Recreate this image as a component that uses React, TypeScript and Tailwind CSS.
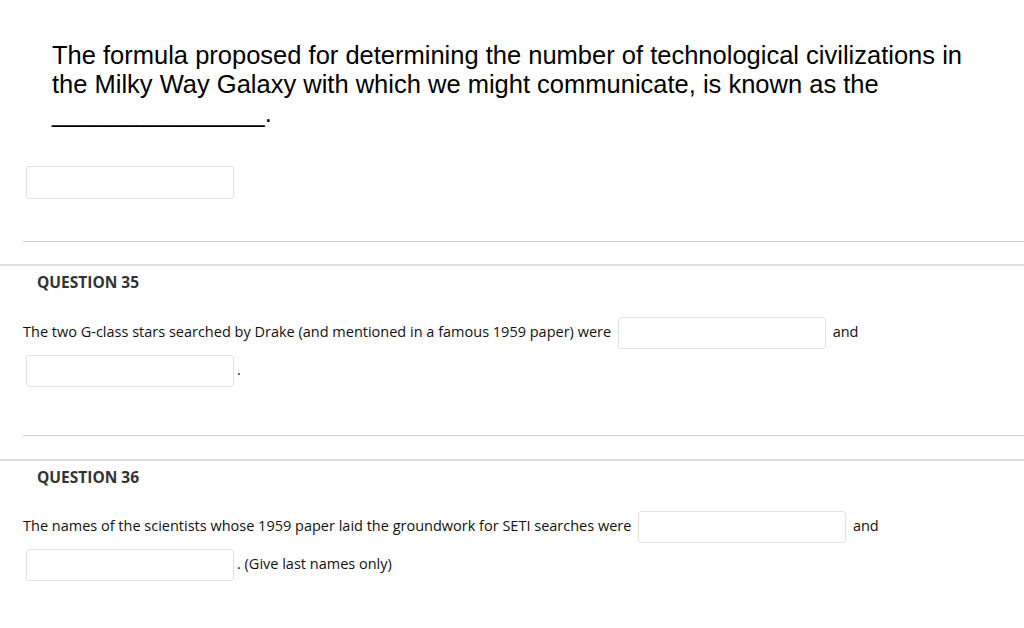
import React from 'react';

function Blank({ className = '' }: { className?: string }) {
  return (
    <input
      type="text"
      className={`inline-block h-[32px] w-[208px] rounded-[3px] border border-[#e2e2e2] bg-white align-middle outline-none ${className}`}
    />
  );
}

function QuestionHeader({ num, gap }: { num: number; gap: string }) {
  return (
    <>
      <div className="ml-[23px] h-px bg-[#cfcfcf]" />
      <div className={`${gap} h-[2px] bg-[#e0e0e0]`} />
      <h3 className="mt-[6px] pl-[37px] text-[15.5px] font-bold leading-[20px] text-[#333]">QUESTION {num}</h3>
    </>
  );
}

export default function App() {
  return (
    <div className="min-h-[628px] w-[1024px] bg-white pb-10 font-['Open_Sans',sans-serif]">
      <div className="pl-[52px] pr-[40px] pt-[41px] font-['Liberation_Sans',Arial,sans-serif] text-[25.5px] leading-[29px] text-black">
        <p>
          The formula proposed for determining the number of technological civilizations in the Milky Way Galaxy with
          which we might communicate, is known as the
        </p>
        <p>_______________.</p>
      </div>

      <div className="mt-[38px] pl-[26px]">
        <Blank className="h-[33px]" />
      </div>

      <div className="mt-[42px]">
        <QuestionHeader num={35} gap="mt-[22px]" />
        <p className="mt-[21px] pl-[23px] pr-[8px] text-[14.5px] leading-[38px] text-[#111]">
          The two G-class stars searched by Drake (and mentioned in a famous 1959 paper) were <Blank className="mx-[3px]" /> and{' '}
          <Blank className="mx-[3px]" />.
        </p>
      </div>

      <div className="mt-[46px]">
        <QuestionHeader num={36} gap="mt-[23px]" />
        <p className="mt-[20px] pl-[23px] pr-[8px] text-[14.5px] leading-[38px] text-[#111]">
          The names of the scientists whose 1959 paper laid the groundwork for SETI searches were{' '}
          <Blank className="mx-[3px]" /> and <Blank className="mx-[3px]" />. (Give last names only)
        </p>
      </div>
    </div>
  );
}
